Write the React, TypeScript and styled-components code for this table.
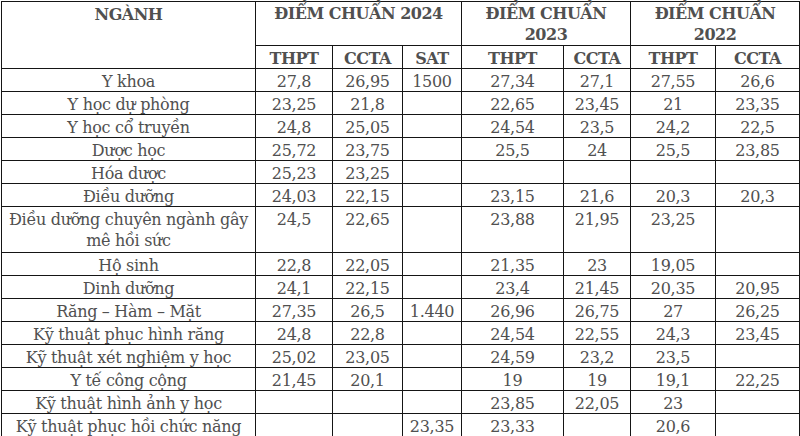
import React from "react";
import styled, { createGlobalStyle } from "styled-components";

const GlobalStyle = createGlobalStyle`
  html, body {
    margin: 0;
    padding: 0;
    background: #ffffff;
  }
`;

const textColor = "#505050";
const lineColor = "#151515";

const Page = styled.div`
  width: 800px;
  height: 436px;
  overflow: hidden;
  padding: 1px 0 0 1px;
  box-sizing: border-box;
  background: #ffffff;
`;

const Table = styled.table`
  border-collapse: collapse;
  table-layout: fixed;
  width: 798px;
  font-family: "DejaVu Serif", "Liberation Serif", serif;
  font-size: 16px;
  letter-spacing: -0.3px;
  color: ${textColor};
`;

const Th = styled.th<{ $tall?: boolean }>`
  border: 1.5px solid ${lineColor};
  font-weight: bold;
  letter-spacing: -0.5px;
  text-align: center;
  vertical-align: top;
  line-height: ${(p) => (p.$tall ? "21px" : "19px")};
  padding: ${(p) => (p.$tall ? "1px 2px 0" : "3px 2px 0")};
  height: ${(p) => (p.$tall ? "44px" : "23px")};
  box-sizing: border-box;
  white-space: nowrap;
`;

const Td = styled.td<{ $double?: boolean }>`
  border: 1.5px solid ${lineColor};
  text-align: center;
  vertical-align: top;
  line-height: ${(p) => (p.$double ? "21px" : "19px")};
  padding: ${(p) => (p.$double ? "2px 2px 0" : "3px 2px 0")};
  height: ${(p) => (p.$double ? "46px" : "23px")};
  box-sizing: border-box;
  white-space: nowrap;
`;

const colWidths = [254, 77, 70, 59, 102, 67, 85, 84];

type Row = { name: React.ReactNode; values: string[]; double?: boolean };

const rows: Row[] = [
  { name: "Y khoa", values: ["27,8", "26,95", "1500", "27,34", "27,1", "27,55", "26,6"] },
  { name: "Y học dự phòng", values: ["23,25", "21,8", "", "22,65", "23,45", "21", "23,35"] },
  { name: "Y học cổ truyền", values: ["24,8", "25,05", "", "24,54", "23,5", "24,2", "22,5"] },
  { name: "Dược học", values: ["25,72", "23,75", "", "25,5", "24", "25,5", "23,85"] },
  { name: "Hóa dược", values: ["25,23", "23,25", "", "", "", "", ""] },
  { name: "Điều dưỡng", values: ["24,03", "22,15", "", "23,15", "21,6", "20,3", "20,3"] },
  {
    name: (
      <>
        Điều dưỡng chuyên ngành gây
        <br />
        mê hồi sức
      </>
    ),
    values: ["24,5", "22,65", "", "23,88", "21,95", "23,25", ""],
    double: true,
  },
  { name: "Hộ sinh", values: ["22,8", "22,05", "", "21,35", "23", "19,05", ""] },
  { name: "Dinh dưỡng", values: ["24,1", "22,15", "", "23,4", "21,45", "20,35", "20,95"] },
  { name: "Răng – Hàm – Mặt", values: ["27,35", "26,5", "1.440", "26,96", "26,75", "27", "26,25"] },
  { name: "Kỹ thuật phục hình răng", values: ["24,8", "22,8", "", "24,54", "22,55", "24,3", "23,45"] },
  { name: "Kỹ thuật xét nghiệm y học", values: ["25,02", "23,05", "", "24,59", "23,2", "23,5", ""] },
  { name: "Y tế công cộng", values: ["21,45", "20,1", "", "19", "19", "19,1", "22,25"] },
  { name: "Kỹ thuật hình ảnh y học", values: ["", "", "", "23,85", "22,05", "23", ""] },
  { name: "Kỹ thuật phục hồi chức năng", values: ["", "", "23,35", "23,33", "", "20,6", ""] },
];

const App = () => {
  return (
    <Page>
      <GlobalStyle />
      <Table>
        <colgroup>
          {colWidths.map((w, i) => (
            <col key={i} style={{ width: w }} />
          ))}
        </colgroup>
        <thead>
          <tr>
            <Th rowSpan={2}>NGÀNH</Th>
            <Th colSpan={3} $tall>
              ĐIỂM CHUẨN 2024
            </Th>
            <Th colSpan={2} $tall>
              ĐIỂM CHUẨN
              <br />
              2023
            </Th>
            <Th colSpan={2} $tall>
              ĐIỂM CHUẨN
              <br />
              2022
            </Th>
          </tr>
          <tr>
            <Th>THPT</Th>
            <Th>CCTA</Th>
            <Th>SAT</Th>
            <Th>THPT</Th>
            <Th>CCTA</Th>
            <Th>THPT</Th>
            <Th>CCTA</Th>
          </tr>
        </thead>
        <tbody>
          {rows.map((row, i) => (
            <tr key={i}>
              <Td $double={row.double}>{row.name}</Td>
              {row.values.map((v, j) => (
                <Td key={j} $double={row.double}>
                  {v}
                </Td>
              ))}
            </tr>
          ))}
        </tbody>
      </Table>
    </Page>
  );
};

export default App;
